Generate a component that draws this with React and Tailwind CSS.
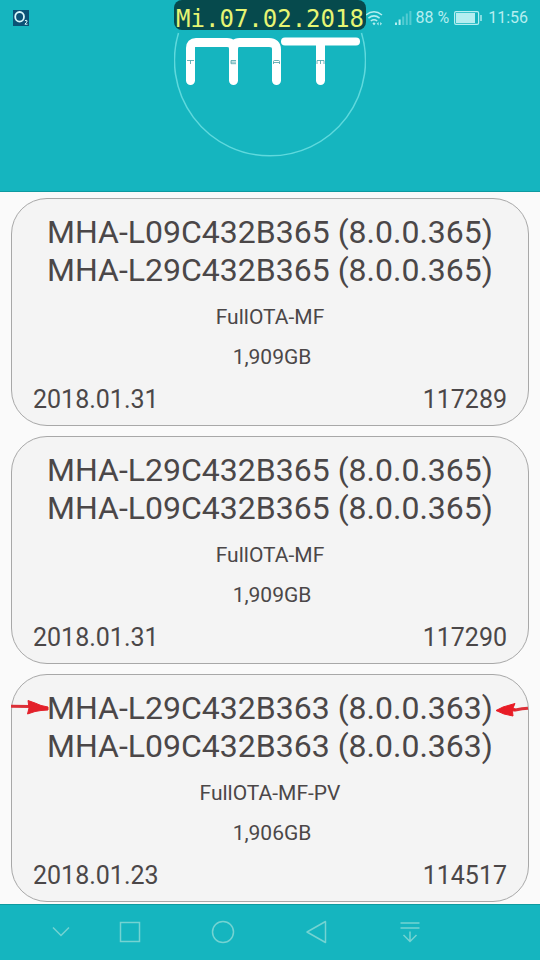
const releases = [
  { id: '117289', names: ['MHA-L09C432B365 (8.0.0.365)', 'MHA-L29C432B365 (8.0.0.365)'], kind: 'FullOTA-MF', size: '1,909GB', date: '2018.01.31' },
  { id: '117290', names: ['MHA-L29C432B365 (8.0.0.365)', 'MHA-L09C432B365 (8.0.0.365)'], kind: 'FullOTA-MF', size: '1,909GB', date: '2018.01.31' },
  { id: '114517', names: ['MHA-L29C432B363 (8.0.0.363)', 'MHA-L09C432B363 (8.0.0.363)'], kind: 'FullOTA-MF-PV', size: '1,906GB', date: '2018.01.23', marked: true },
];

function StatusBar() {
  return (
    <div className="relative flex h-8 items-center justify-between px-3 pt-[3px] text-base text-[#b5eef0]">
      <svg className="h-4 w-[17px]" viewBox="0 0 17 16" role="img" aria-label="O2">
        <rect x="1" width="16" height="16" fill="#0b5276" />
        <ellipse cx="7.6" cy="6.8" rx="4.4" ry="4.8" fill="none" stroke="#d8f8fb" strokeWidth="1.8" />
        <path d="M12.9 10.8q1.3-1.2 2.2 0q.3 1-2.2 3.4h2.6" fill="none" stroke="#d8f8fb" strokeWidth="1" />
      </svg>
      <div className="flex items-center">
        <svg className="mr-3 h-4 w-[18px]" viewBox="0 0 18 16" fill="none" stroke="currentColor" strokeWidth="1.5">
          <path d="M1 5q8-6.6 16 0M3.4 8.2q5.6-4.6 11.2 0M5.8 11q3.2-2.6 6.4 0" />
          <path d="M9 12.2l1.6 1.6L9 15.2l-1.6-1.6zM11.8 13.8l1.8-1.8v3.6zM17 13.8l-1.8-1.8v3.6z" fill="currentColor" stroke="none" />
        </svg>
        <svg className="mr-[3px] h-4 w-[17px]" viewBox="0 0 17 16" fill="currentColor">
          <path d="M0 12.5h2V15H0zM3.6 9.5h2V15h-2z" />
          <path opacity="0.4" d="M7.2 6.5h2V15h-2zM10.8 3.5h2V15h-2zM14.4 1h2v14h-2z" />
        </svg>
        <span className="mr-[5px]">88 %</span>
        <svg className="mr-1.5 h-[14px] w-7" viewBox="0 0 28 14">
          <rect x="0.6" y="0.6" width="24" height="12.8" rx="1.4" fill="none" stroke="currentColor" strokeWidth="1.2" />
          <rect x="2" y="2" width="19" height="10" fill="currentColor" />
          <path d="M27 4v6" stroke="currentColor" strokeWidth="1.4" />
        </svg>
        <span>11:56</span>
      </div>
      <div className="absolute inset-x-0 top-0 flex justify-center">
        <time className="h-[30px] rounded-lg bg-[#064a4d] px-0.5 pt-1 font-['DejaVu_Sans_Mono',monospace] text-2xl leading-[30px] text-[#e6f573]">
          Mi.07.02.2018
        </time>
      </div>
    </div>
  );
}

function Logo() {
  return (
    <svg className="mx-auto h-32 w-48" viewBox="174 32 192 128" role="img" aria-label="MT Team">
      <path d="M178.500 33A95.500 95.500 0 1 0 361.500 33" fill="none" stroke="#5fd9dd" strokeWidth="1.500" />
      <g fill="none" stroke="#fff" strokeWidth="9" strokeLinecap="round">
        <path d="M190.500 80.500V48q0-5.500 5.500-5.500H227q6.500 0 6.500 7V80.500" />
        <path d="M233.500 49.500q0-7 6-7H269q7.500 0 7.500 7V80.500" />
        <path d="M320.500 43V80.500" />
      </g>
      <path d="M285 41.500H356" stroke="#fff" strokeWidth="8" strokeLinecap="round" />
      <g fill="none" stroke="#4aa0a6" strokeWidth="0.800">
        <path d="M187 60.500h7M190.500 60.500v3.500" />
        <path d="M236 60.500h-5v3.200h5M231 62.100h5" />
        <path d="M273.500 64v-2.500q0-1 1-1h4q1 0 1 1V64M273.500 62.500h6" />
        <path d="M317 64v-3.500h7V64M320.500 60.500V64" />
      </g>
    </svg>
  );
}

function Markers() {
  return (
    <>
      <svg className="absolute top-6 -left-px h-4 w-[38px]" viewBox="0 0 38 16" aria-hidden="true">
        <path d="M0 7.200L18 7.600" stroke="#dc3038" strokeWidth="3" />
        <path d="M17 1.500l7 2.500 6 2.500 7 1.500v3l-7 .5-6 1-7.500 2.500 1.500-6z" fill="#e3202a" stroke="#e3202a" strokeLinejoin="round" />
      </svg>
      <svg className="absolute top-7 -right-px h-4 w-[34px]" viewBox="0 0 34 16" aria-hidden="true">
        <path d="M33 5.200l-6 .6-8 1.500" fill="none" stroke="#dc3038" strokeWidth="3" />
        <path d="M1 7.500l7-3.500 12-3.500-2 4.500 3 1.500-3.500 2 .500 4.500-9-2z" fill="#e81c26" stroke="#e81c26" strokeLinejoin="round" />
      </svg>
    </>
  );
}

function ReleaseCard({ release }) {
  return (
    <li className="relative rounded-[36px] border border-[#a8a8a8] bg-[#f4f4f4] px-[21px] pt-[14px] pb-[5px] text-center">
      <h2 className="text-[32px] leading-[38px]">
        {release.names.map((name) => (
          <span key={name} className="block whitespace-nowrap">{name}</span>
        ))}
      </h2>
      <p className="mt-2 text-[21px] leading-10">{release.kind}</p>
      <p className="pl-1 text-[21px] leading-10">{release.size}</p>
      <div className="mt-[3px] flex justify-between text-[25px] leading-10">
        <time>{release.date}</time>
        <span>{release.id}</span>
      </div>
      {release.marked && <Markers />}
    </li>
  );
}

const navItems = [
  { label: 'Recent apps', shape: <path d="M2.500 2.500h19v19h-19z" /> },
  { label: 'Home', shape: <circle cx="12" cy="12" r="10.500" /> },
  { label: 'Back', shape: <path d="M20.500 1.500v21L2 12z" strokeLinejoin="round" /> },
  { label: 'Notifications', shape: <path d="M2.500 3h19M2.500 8h19M12 11.500v10M5.500 15l6.500 6.500 6.500-6.500" /> },
];

function NavButton({ label, children }) {
  return (
    <button type="button" aria-label={label} className="text-[#74d3d2]">
      <svg className="h-6 w-6" viewBox="0 0 24 24" fill="none" stroke="currentColor" strokeWidth="1.500">
        {children}
      </svg>
    </button>
  );
}

export default function App() {
  return (
    <div className="flex min-h-screen flex-col bg-[#fafafa] font-[Roboto,sans-serif] text-[#4b4748]">
      <header className="h-48 border-b border-[#0e9aa0] bg-[#15b5bf]">
        <StatusBar />
        <Logo />
      </header>
      <main className="flex-1 px-[11px] pt-1.5 pb-0.5">
        <ul className="flex flex-col gap-2.5">
          {releases.map((release) => (
            <ReleaseCard key={release.id} release={release} />
          ))}
        </ul>
      </main>
      <nav className="flex h-14 items-center gap-[45px] border-t border-[#0e9aa0] bg-[#15b5bf] pr-[118px] pb-0.5 pl-[49px]">
        <NavButton label="Hide bar">
          <path d="M4 7.500l8 8 8-8" />
        </NavButton>
        <div className="flex flex-1 items-center justify-between">
          {navItems.map((item) => (
            <NavButton key={item.label} label={item.label}>
              {item.shape}
            </NavButton>
          ))}
        </div>
      </nav>
    </div>
  );
}
